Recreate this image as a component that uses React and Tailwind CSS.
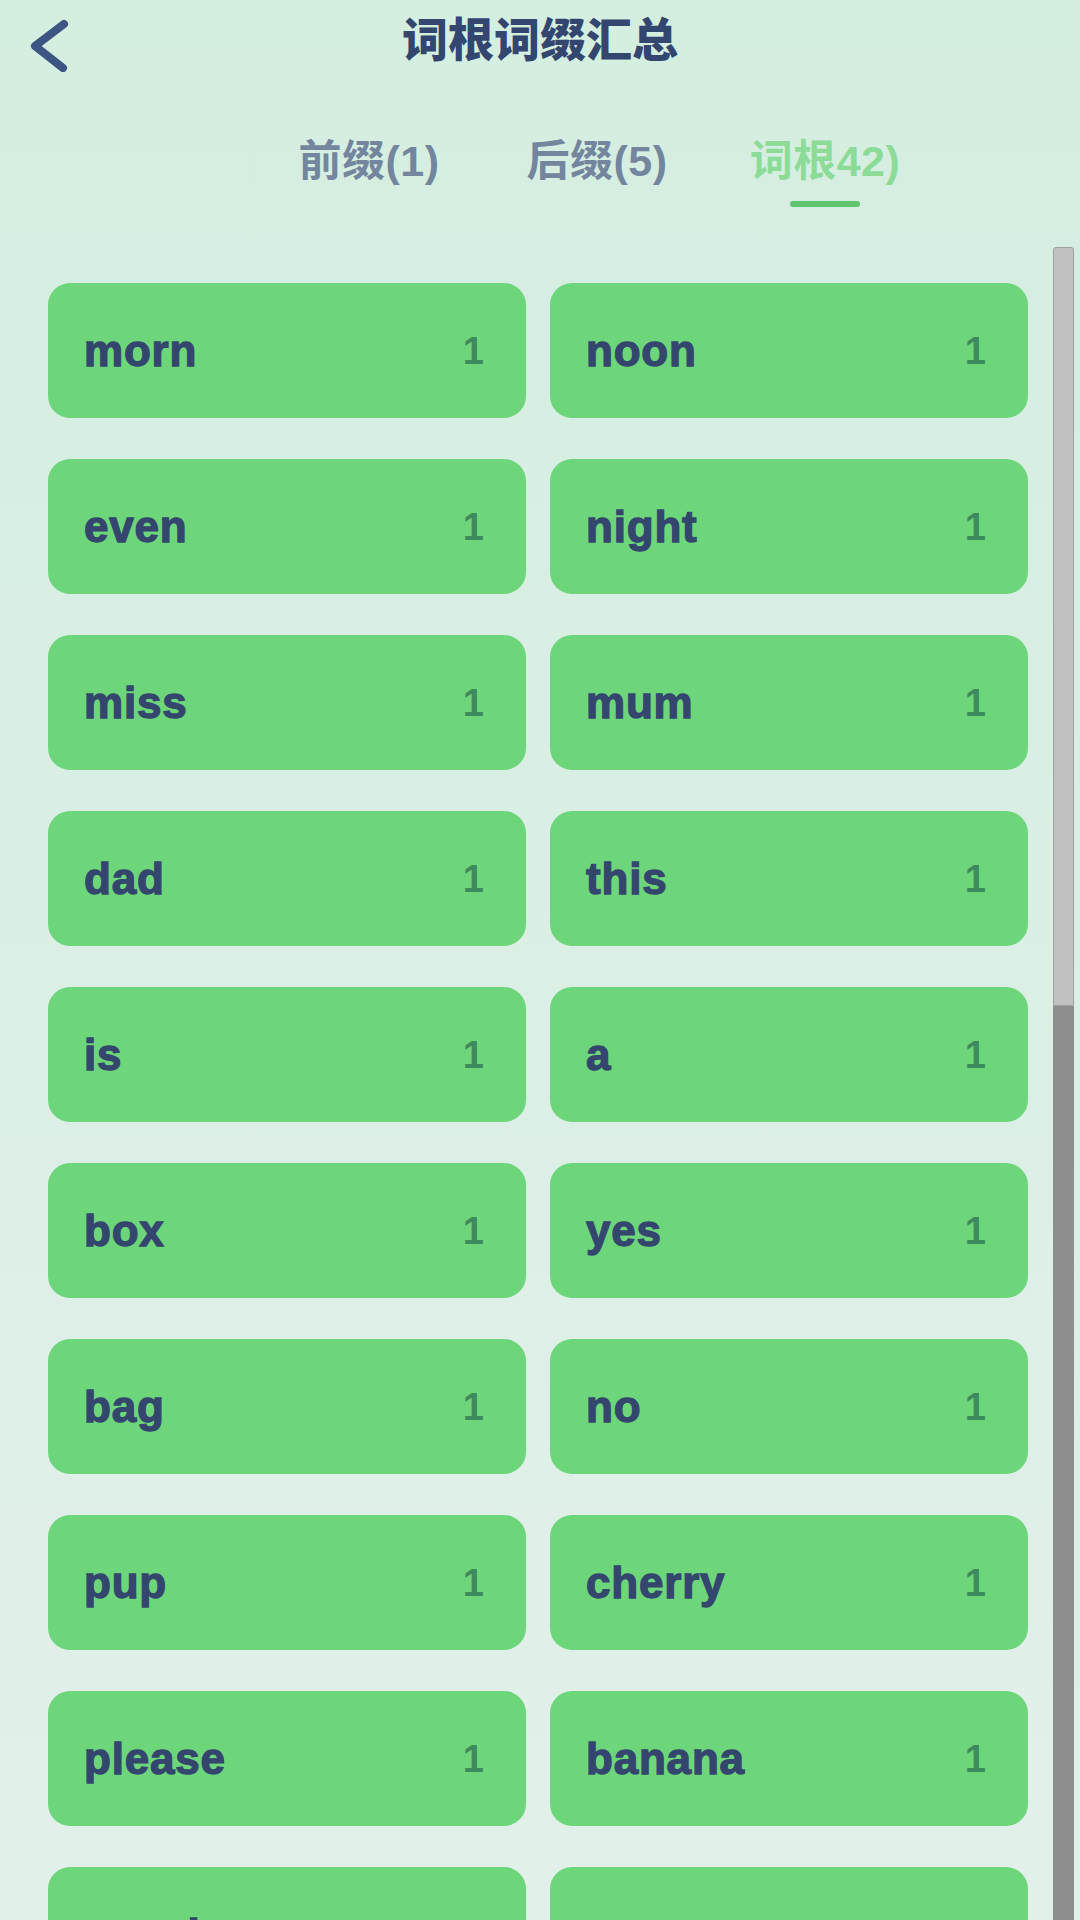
import { useState } from 'react';

const roots = [
  { word: 'morn', count: 1 },
  { word: 'noon', count: 1 },
  { word: 'even', count: 1 },
  { word: 'night', count: 1 },
  { word: 'miss', count: 1 },
  { word: 'mum', count: 1 },
  { word: 'dad', count: 1 },
  { word: 'this', count: 1 },
  { word: 'is', count: 1 },
  { word: 'a', count: 1 },
  { word: 'box', count: 1 },
  { word: 'yes', count: 1 },
  { word: 'bag', count: 1 },
  { word: 'no', count: 1 },
  { word: 'pup', count: 1 },
  { word: 'cherry', count: 1 },
  { word: 'please', count: 1 },
  { word: 'banana', count: 1 },
  { word: 'peach', count: 1 },
  { word: 'grape', count: 1 },
];

const tabs = [
  { key: 'prefix', label: '前缀(1)' },
  { key: 'suffix', label: '后缀(5)' },
  { key: 'root', label: '词根42)' },
];

function BackArrow() {
  return (
    <svg width="100" height="72" viewBox="0 0 100 72" fill="none">
      <polyline
        points="64,24 35,46 63,68"
        stroke="#3e5584"
        strokeWidth="8"
        strokeLinecap="round"
        strokeLinejoin="round"
      />
    </svg>
  );
}

function RootCard({ word, count }) {
  return (
    <div className="h-[135px] rounded-[22px] bg-[#6dd67b] flex items-center justify-between pl-[36px] pr-[42px]">
      <span className="text-[44px] leading-none font-bold text-[#34466e] tracking-[0.8px] [-webkit-text-stroke:1.3px_#34466e]">
        {word}
      </span>
      <span className="text-[38px] leading-none font-bold text-[#3f8a5c]">{count}</span>
    </div>
  );
}

export default function App() {
  const [active, setActive] = useState('root');

  return (
    <div className="w-[1080px] h-[1920px] overflow-hidden flex flex-col bg-gradient-to-b from-[#d4eee0] to-[#e2f0ea] font-['Liberation_Sans','Noto_Sans_CJK_SC',sans-serif]">
      <div className="h-[72px] grid grid-cols-[100px_1fr_100px] items-center">
        <button className="h-full flex items-center">
          <BackArrow />
        </button>
        <h1 className="text-center text-[46px] leading-none font-black text-[#33466f] font-['Noto_Sans_CJK_SC',sans-serif]">
          词根词缀汇总
        </h1>
        <div />
      </div>

      <div className="mt-[68px] pl-[255px] flex">
        {tabs.map((t) => (
          <button
            key={t.key}
            onClick={() => setActive(t.key)}
            className="w-[228px] flex flex-col items-center"
          >
            <span
              className={
                'text-[43px] leading-none font-bold tracking-[0.5px] ' +
                (active === t.key ? 'text-[#8cdc98]' : 'text-[#74869e]')
              }
            >
              {t.label}
            </span>
            <span
              className={
                'mt-[18px] h-[6px] w-[70px] rounded-full ' +
                (active === t.key ? 'bg-[#5ec56e]' : 'bg-transparent')
              }
            />
          </button>
        ))}
      </div>

      <div className="mt-[40px] flex-1 flex min-h-0">
        <div className="flex-1 overflow-hidden pl-[48px] pt-[36px]">
          <div className="w-[980px] grid grid-cols-2 gap-x-[24px] gap-y-[41px]">
            {roots.map((r) => (
              <RootCard key={r.word} word={r.word} count={r.count} />
            ))}
          </div>
        </div>
        <div className="w-[21px] mr-[6px] flex flex-col">
          <div className="h-[759px] bg-[#c1c1c1] border border-[#a0a0a0] rounded-t-[3px]" />
          <div className="flex-1 bg-[#8e8e8e]" />
        </div>
      </div>
    </div>
  );
}
